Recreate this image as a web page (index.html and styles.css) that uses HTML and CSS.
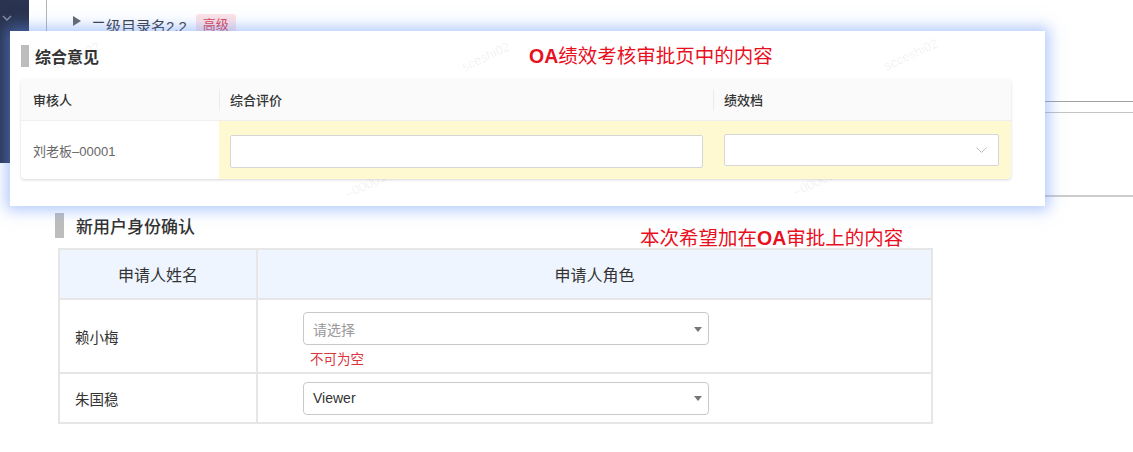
FILE: index.html
```html
<!DOCTYPE html>
<html lang="zh-CN">
<head>
<meta charset="utf-8">
<title>OA审批</title>
<link rel="stylesheet" href="styles.css">
</head>
<body>
<div class="page">
  <aside class="sidebar">
    <svg class="side-chev" width="10" height="6" viewBox="0 0 10 6"><polyline points="1,1 5,5 9,1" fill="none" stroke="#8790a8" stroke-width="1.4"/></svg>
  </aside>
  <main class="main">
    <div class="tree">
      <div class="tree-item">
        <svg class="tree-caret" width="8" height="10" viewBox="0 0 8 10"><polygon points="0,0 8,5 0,10" fill="#666"/></svg>
        <span class="tree-label">二级目录名2.2</span>
        <span class="tag">高级</span>
      </div>
    </div>
    <div class="rules"><div class="rule-box"></div></div>
    <section class="apply">
      <div class="sec-head sec-head-lg">
        <span class="sec-bar sec-bar-lg"></span>
        <h3 class="sec-title sec-title-lg">新用户身份确认</h3>
        <span class="note note-apply">本次希望加在<b>OA</b>审批上的内容</span>
      </div>
      <div class="apply-grid">
        <div class="ag-head">申请人姓名</div>
        <div class="ag-head">申请人角色</div>
        <div class="ag-name">赖小梅</div>
        <div class="ag-role ag-role-top">
          <div class="sel"><span class="placeholder">请选择</span><i class="tri"></i></div>
          <div class="err">不可为空</div>
        </div>
        <div class="ag-name ag-short">朱国稳</div>
        <div class="ag-role ag-short">
          <div class="sel"><span class="sel-val">Viewer</span><i class="tri"></i></div>
        </div>
      </div>
    </section>
  </main>

  <div class="popup">
    <span class="wm wm1">sceshi02</span>
    <span class="wm wm2">sceshi02</span>
    <span class="wm wm3">scceshi02</span>
    <span class="wm wm5">–00001-00001</span>
    <span class="wm wm6">–00001-00001</span>
    <div class="sec-head">
      <span class="sec-bar"></span>
      <h3 class="sec-title">综合意见</h3>
    </div>
    <span class="note note-popup"><b>OA</b>绩效考核审批页中的内容</span>
    <div class="review">
      <div class="rv-head">审核人</div>
      <div class="rv-head rv-sep">综合评价</div>
      <div class="rv-head rv-sep">绩效档</div>
      <div class="rv-cell rv-name">刘老板–00001</div>
      <div class="rv-cell rv-hl rv-input-cell"><div class="text-input"></div></div>
      <div class="rv-cell rv-hl rv-select-cell">
        <div class="ant-select">
          <svg width="11" height="7" viewBox="0 0 11 7"><polyline points="0.5,0.5 5.5,5.5 10.5,0.5" fill="none" stroke="#bfbfbf" stroke-width="1"/></svg>
        </div>
      </div>
    </div>
  </div>
</div>
</body>
</html>
```

FILE: styles.css
```css
* { box-sizing: border-box; }

html, body {
  margin: 0;
  padding: 0;
  background: #fff;
}

body {
  font-family: "Liberation Sans", "Noto Sans CJK SC", sans-serif;
  color: #333;
}

.page {
  position: relative;
  display: flex;
  align-items: flex-start;
  width: 1133px;
  height: 452px;
  overflow: hidden;
}

.sidebar {
  flex: none;
  width: 29px;
  height: 163px;
  background: #2a3450;
  padding: 15px 0 0 2px;
}

.side-chev { display: block; }

.main {
  flex: 1;
  min-width: 0;
}

/* background tree */
.tree {
  margin-left: 17px;
  height: 101px;
  border-left: 1px solid #b4b4b4;
  padding: 14px 0 0 26px;
}

.tree-item {
  display: flex;
  align-items: center;
  height: 22px;
}

.tree-caret {
  flex: none;
  margin-bottom: 8px;
}

.tree-label {
  margin-left: 10px;
  font-size: 15px;
  color: #3a3a3a;
}

.tag {
  margin-left: 9px;
  height: 22px;
  line-height: 22px;
  padding: 0 7px;
  font-size: 13px;
  color: #e5404b;
  background: #fde3e5;
  border-radius: 3px;
}

.rules {
  border-top: 1px solid #a3a3a3;
  padding-top: 10px;
}

.rule-box {
  height: 85px;
  border-top: 1px solid #c4c4c4;
  border-bottom: 2px solid #cdcdcd;
}

/* section headers */
.sec-head {
  display: flex;
  align-items: center;
  height: 22px;
}

.sec-head-lg { height: 25px; }

.sec-bar {
  flex: none;
  width: 8px;
  height: 22px;
  background: #bdbdbd;
}

.sec-title {
  margin: 0 0 0 6px;
  font-size: 16px;
  font-weight: 700;
  color: #333;
}

.note {
  position: absolute;
  font-size: 19.5px;
  line-height: 24px;
  color: #e8101f;
  white-space: nowrap;
}

.note b { font-weight: 700; }

/* apply section */
.apply {
  position: relative;
  margin-top: 16px;
  padding-left: 26px;
}

.sec-bar-lg {
  width: 9px;
  height: 25px;
}

.sec-title-lg {
  margin-left: 12px;
  font-size: 17px;
  font-weight: 500;
}

.note-apply {
  left: 611px;
  top: 13px;
}

.apply-grid {
  display: grid;
  grid-template-columns: 198px 675px;
  margin: 10px 0 0 3px;
  width: 875px;
  border-top: 2px solid #e6e6e6;
  border-left: 2px solid #e6e6e6;
}

.apply-grid > div {
  border-right: 2px solid #e6e6e6;
  border-bottom: 2px solid #e6e6e6;
}

.ag-head {
  height: 50px;
  display: flex;
  align-items: center;
  justify-content: center;
  background: #eef5ff;
  font-size: 16px;
  color: #333;
}

.ag-name {
  height: 74px;
  display: flex;
  align-items: center;
  padding-left: 15px;
  font-size: 14.5px;
  color: #333;
}

.ag-role {
  height: 74px;
  padding-left: 45px;
}

.ag-role-top { padding-top: 12px; }

.ag-short { height: 50px; }

.ag-role.ag-short {
  display: flex;
  align-items: center;
}

.sel {
  width: 406px;
  height: 33px;
  border: 1px solid #c9c9c9;
  border-radius: 4px;
  background: #fff;
  display: flex;
  align-items: center;
  justify-content: space-between;
  padding: 0 6px 0 9px;
  font-size: 14px;
}

.placeholder { color: #999; }
.sel-val { color: #333; }

.tri {
  width: 0;
  height: 0;
  border-left: 4px solid transparent;
  border-right: 4px solid transparent;
  border-top: 5px solid #777;
  margin-top: 1px;
}

.err {
  margin-top: 5px;
  padding-left: 7px;
  font-size: 13.5px;
  line-height: 20px;
  color: #d9363e;
}

/* popup card */
.popup {
  position: absolute;
  left: 10px;
  top: 31px;
  width: 1035px;
  height: 175px;
  background: #fff;
  box-shadow: 0 0 14px 4px rgba(100, 148, 250, 0.5);
  padding: 14px 0 0 11px;
  overflow: hidden;
}

.note-popup {
  left: 519px;
  top: 13px;
}

.wm {
  position: absolute;
  font-size: 13px;
  color: rgba(0, 0, 0, 0.07);
  transform: rotate(-25deg);
  white-space: nowrap;
  pointer-events: none;
}

.wm1 { left: 40px; top: 18px; }
.wm2 { left: 450px; top: 18px; }
.wm3 { left: 872px; top: 16px; }
.wm5 { left: 332px; top: 138px; }
.wm6 { left: 780px; top: 136px; }

.review {
  position: relative;
  display: grid;
  grid-template-columns: 198px 494px 298px;
  width: 990px;
  margin-top: 12px;
  border-radius: 4px;
  overflow: hidden;
  box-shadow: 0 1px 3px rgba(0, 0, 0, 0.16);
}

.rv-head {
  position: relative;
  height: 42px;
  display: flex;
  align-items: center;
  padding-left: 12px;
  background: #fafafa;
  border-bottom: 1px solid #efefef;
  font-size: 13px;
  font-weight: 500;
  color: #333;
}

.rv-sep { padding-left: 11px; }

.rv-sep::before {
  content: "";
  position: absolute;
  left: 0;
  top: 10px;
  width: 1px;
  height: 22px;
  background: #ebebeb;
}

.rv-cell {
  height: 58px;
}

.rv-name {
  display: flex;
  align-items: center;
  padding-left: 12px;
  font-size: 13px;
  color: #666;
}

.rv-hl { background: #fff9d1; }

.rv-input-cell { padding: 14px 10px 0 11px; }

.text-input {
  height: 33px;
  background: #fff;
  border: 1px solid #d6d6d6;
  border-radius: 2px;
}

.rv-select-cell { padding: 13px 12px 0 11px; }

.ant-select {
  height: 32px;
  background: #fff;
  border: 1px solid #d6d6d6;
  border-radius: 2px;
  display: flex;
  align-items: center;
  justify-content: flex-end;
  padding-right: 11px;
}

.ant-select svg { display: block; }
```
